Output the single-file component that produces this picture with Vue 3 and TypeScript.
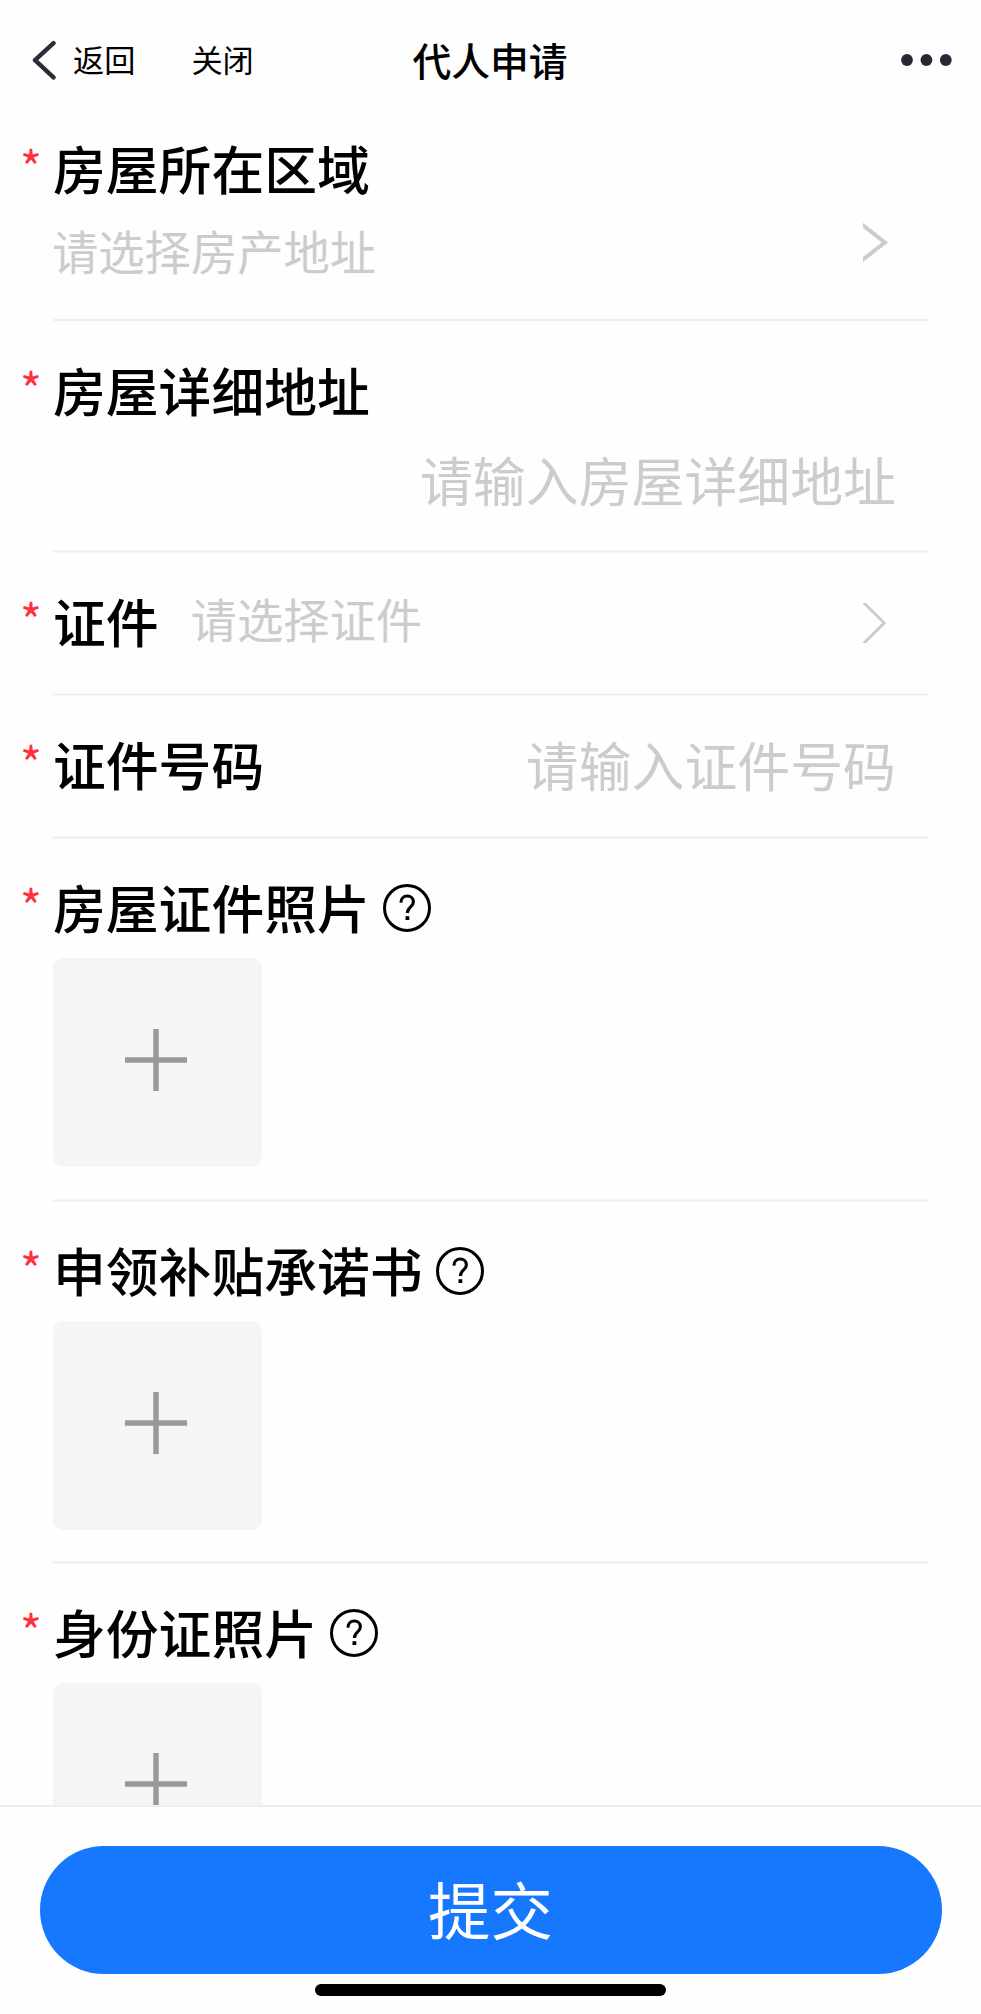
<script setup lang="ts">
interface Field {
  key: string
  label: string
  kind: 'picker-block' | 'input-block' | 'picker' | 'input' | 'upload'
  placeholder?: string
}

const fields: Field[] = [
  { key: 'area', label: '房屋所在区域', kind: 'picker-block', placeholder: '请选择房产地址' },
  { key: 'address', label: '房屋详细地址', kind: 'input-block', placeholder: '请输入房屋详细地址' },
  { key: 'cert', label: '证件', kind: 'picker', placeholder: '请选择证件' },
  { key: 'certno', label: '证件号码', kind: 'input', placeholder: '请输入证件号码' },
  { key: 'housephoto', label: '房屋证件照片', kind: 'upload' },
  { key: 'promise', label: '申领补贴承诺书', kind: 'upload' },
  { key: 'idphoto', label: '身份证照片', kind: 'upload' },
]
</script>

<template>
  <div class="page">
    <header class="nav">
      <div class="nav-left">
        <svg class="back" width="24" height="40" viewBox="0 0 24 40" fill="none" stroke="#2a2d37" stroke-width="4.4" stroke-linecap="round" stroke-linejoin="round">
          <path d="M21.5 3.2L3 20.2L21.5 37.4" />
        </svg>
        <span class="nav-text">返回</span>
        <span class="nav-text close">关闭</span>
      </div>
      <h1>代人申请</h1>
      <div class="nav-right">
        <svg width="52" height="12" viewBox="0 0 52 12" fill="#262932">
          <circle cx="6" cy="6" r="5.9" />
          <circle cx="25.4" cy="6" r="5.9" />
          <circle cx="44.8" cy="6" r="5.9" />
        </svg>
      </div>
    </header>

    <main class="form">
      <section v-for="f in fields" :key="f.key" class="field" :class="f.kind">
        <div class="head">
          <span class="star">*</span>
          <span class="label">{{ f.label }}</span>
          <svg v-if="f.kind === 'upload'" class="help" width="48" height="48" viewBox="0 0 48 48" fill="none" stroke="#000">
            <circle cx="24" cy="24" r="22.5" stroke-width="3" />
            <path d="M17.9 18.6C18 14.6 20.7 12 24.2 12C27.8 12 30.4 14.5 30.4 17.9C30.4 23.2 24.4 22.6 24.4 29" stroke-width="3.1" />
            <path d="M24.4 32.2V36" stroke-width="3.8" />
          </svg>
          <span v-if="f.kind === 'picker'" class="hint small">{{ f.placeholder }}</span>
          <span v-if="f.kind === 'input'" class="hint right">{{ f.placeholder }}</span>
          <svg v-if="f.kind === 'picker'" class="arrow" width="24" height="40" viewBox="0 0 24 40" fill="none" stroke="#ccc" stroke-width="3">
            <path d="M0 -1L21.2 20L0 41" />
          </svg>
        </div>
        <div v-if="f.kind === 'picker-block'" class="line">
          <span class="hint small">{{ f.placeholder }}</span>
          <svg class="arrow" width="25" height="39" viewBox="0 0 25 39" fill="none" stroke="#ccc" stroke-width="4">
            <path d="M-2 .8L22 19.4L-2 38" />
          </svg>
        </div>
        <div v-if="f.kind === 'input-block'" class="line">
          <span class="hint right">{{ f.placeholder }}</span>
        </div>
        <button v-if="f.kind === 'upload'" class="tile" type="button" aria-label="上传">
          <svg width="62" height="62" viewBox="0 0 62 62" stroke="#999" stroke-width="5.4">
            <path d="M31 0V62M0 31H62" />
          </svg>
        </button>
      </section>
    </main>

    <footer class="footer">
      <button class="submit" type="button">提交</button>
      <div class="home-bar"></div>
    </footer>
  </div>
</template>

<style>
body {
  margin: 0;
  background: #fefefe;
}
</style>

<style scoped>
.page {
  width: 981px;
  height: 2014px;
  display: flex;
  flex-direction: column;
  overflow: hidden;
  background: #fefefe;
  color: #000;
  font-family: "Noto Sans CJK SC", sans-serif;
}
.nav {
  height: 120px;
  flex: none;
  display: grid;
  grid-template-columns: 1fr auto 1fr;
  align-items: center;
  padding: 0 28px 0 32px;
  box-sizing: border-box;
}
.nav-left {
  display: flex;
  align-items: center;
}
.nav-text {
  font-size: 31.2px;
  line-height: 44px;
  padding-bottom: 2px;
}
.back {
  margin-right: 17px;
}
.close {
  margin-left: 56px;
}
h1 {
  margin: 0;
  padding: 0 5px 3px 0;
  font-size: 38.8px;
  line-height: 56px;
  font-weight: 500;
}
.nav-right {
  display: flex;
  justify-content: flex-end;
}
.form {
  flex: 1;
  min-height: 0;
  overflow: hidden;
}
.field {
  box-sizing: border-box;
  margin-right: 53px;
  display: flex;
  flex-direction: column;
  background: linear-gradient(#f7f7f7 1px, #eee 1px, #eee 2px, #f7f7f7 2px) 53px 100% / 100% 3px no-repeat;
}
.picker-block {
  height: 201px;
  padding-top: 14px;
  background: linear-gradient(#eee, #eee) 53px 100% / 100% 2px no-repeat;
}
.input-block {
  height: 232px;
  padding-top: 35px;
}
.picker,
.input {
  height: 143px;
  padding-top: 34px;
}
.upload {
  height: 363px;
  padding-top: 34px;
}
.upload:nth-child(6) {
  height: 362px;
}
.head {
  display: flex;
  align-items: center;
  height: 70px;
}
.star {
  width: 33px;
  padding: 0 0 7px 20px;
  font-size: 47px;
  line-height: 70px;
  color: #ff3141;
}
.label {
  padding-bottom: 5px;
  font-size: 52.8px;
  line-height: 70px;
  font-weight: 500;
}
.help {
  margin-left: 13px;
}
.hint {
  padding-bottom: 5px;
  color: #ccc;
  font-size: 52.9px;
  line-height: 70px;
}
.small {
  font-size: 46.3px;
  line-height: 60px;
}
.picker .small {
  margin-left: 32px;
  padding-bottom: 8px;
}
.right {
  margin-left: auto;
  margin-right: 32px;
}
.input .right {
  padding-bottom: 3px;
}
.arrow {
  margin-left: auto;
  margin-right: 41px;
}
.picker .arrow {
  margin-top: 2px;
}
.line {
  display: flex;
  align-items: center;
  padding-left: 53px;
}
.picker-block .line {
  height: 60px;
  margin-top: 17px;
  padding-left: 52px;
}
.picker-block .line .hint {
  padding-bottom: 2px;
}
.picker-block .line .arrow {
  margin-right: 40px;
  margin-bottom: 18px;
}
.input-block .line {
  height: 70px;
  margin-top: 20px;
}
.tile {
  width: 209px;
  height: 209px;
  margin: 15px 0 0 53px;
  padding: 0 3px 6px 0;
  border: 0;
  border-radius: 10px;
  background: #f5f5f5;
  display: flex;
  align-items: center;
  justify-content: center;
}
.upload:last-child .tile {
  padding-bottom: 8px;
}
.footer {
  flex: none;
  height: 209px;
  box-sizing: border-box;
  border-top: 2px solid #eee;
  padding-top: 39px;
  display: flex;
  flex-direction: column;
  align-items: center;
  background: #fefefe;
}
.submit {
  width: 902px;
  height: 128px;
  border: 0;
  border-radius: 64px;
  padding: 0 0 4px;
  background: #1677ff;
  color: #fff;
  font-family: inherit;
  font-size: 62.4px;
  line-height: 124px;
}
.home-bar {
  width: 351px;
  height: 12px;
  margin-top: 10px;
  border-radius: 6px;
  background: #000;
}
</style>
